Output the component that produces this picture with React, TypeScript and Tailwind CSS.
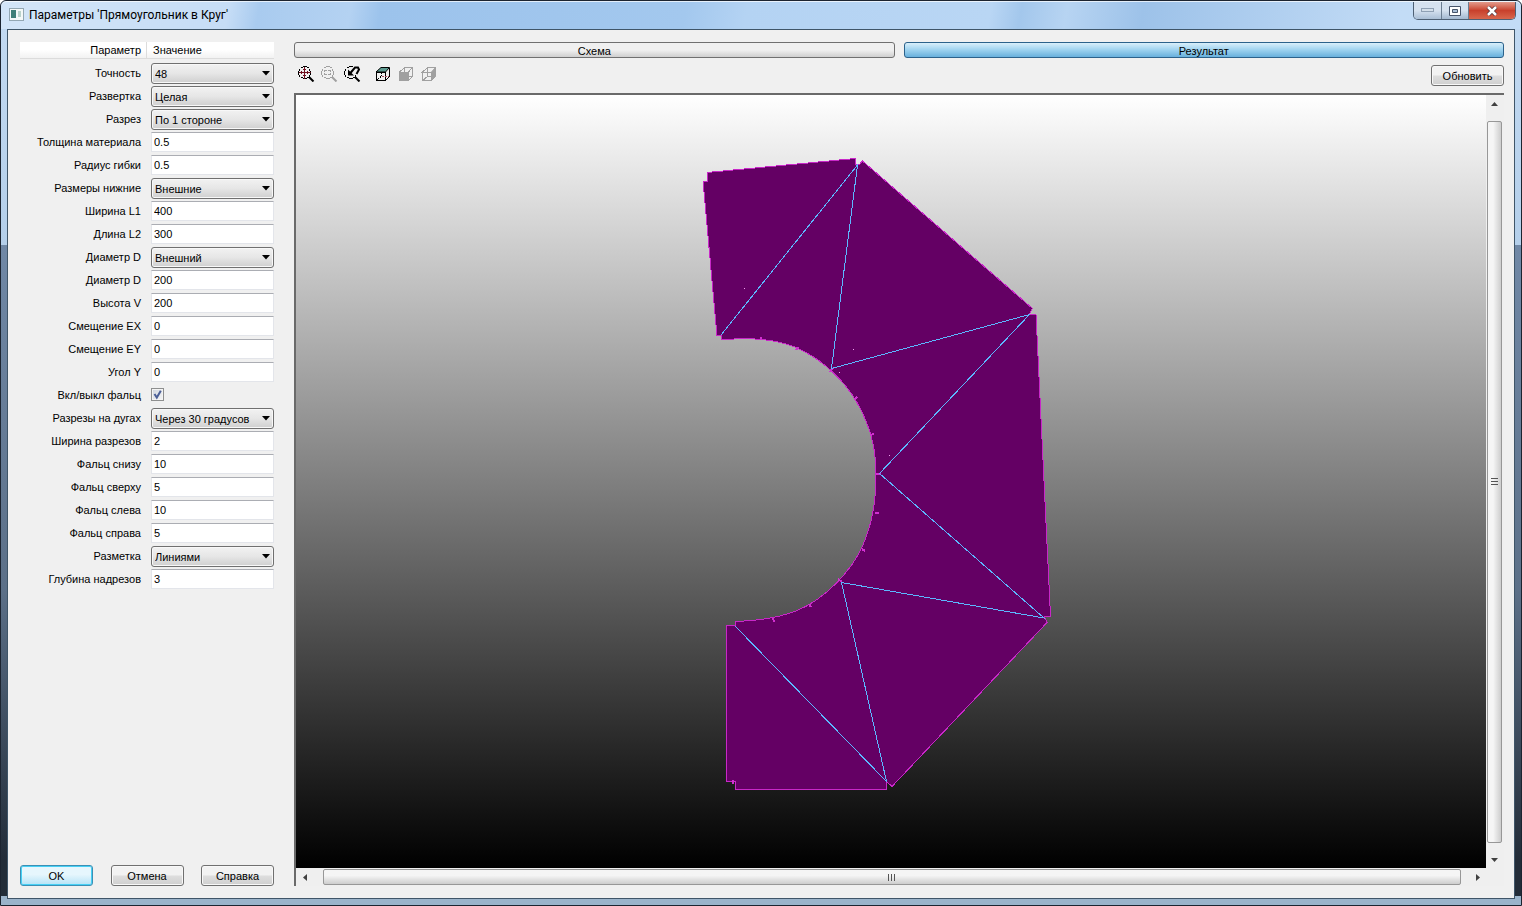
import type { ReactNode } from 'react'

type Param = {
  id: string
  label: string
  kind: 'select' | 'text' | 'check'
  value?: string
}

const params: Param[] = [
  { id: 'accuracy', label: 'Точность', kind: 'select', value: '48' },
  { id: 'unfold', label: 'Развертка', kind: 'select', value: 'Целая' },
  { id: 'cut', label: 'Разрез', kind: 'select', value: 'По 1 стороне' },
  { id: 'thickness', label: 'Толщина материала', kind: 'text', value: '0.5' },
  { id: 'radius', label: 'Радиус гибки', kind: 'text', value: '0.5' },
  { id: 'bottom', label: 'Размеры нижние', kind: 'select', value: 'Внешние' },
  { id: 'l1', label: 'Ширина L1', kind: 'text', value: '400' },
  { id: 'l2', label: 'Длина L2', kind: 'text', value: '300' },
  { id: 'dtype', label: 'Диаметр D', kind: 'select', value: 'Внешний' },
  { id: 'd', label: 'Диаметр D', kind: 'text', value: '200' },
  { id: 'v', label: 'Высота V', kind: 'text', value: '200' },
  { id: 'ex', label: 'Смещение EX', kind: 'text', value: '0' },
  { id: 'ey', label: 'Смещение EY', kind: 'text', value: '0' },
  { id: 'angle', label: 'Угол Y', kind: 'text', value: '0' },
  { id: 'seam', label: 'Вкл/выкл фальц', kind: 'check' },
  { id: 'arcs', label: 'Разрезы на дугах', kind: 'select', value: 'Через 30 градусов' },
  { id: 'cutwidth', label: 'Ширина разрезов', kind: 'text', value: '2' },
  { id: 'seambottom', label: 'Фальц снизу', kind: 'text', value: '10' },
  { id: 'seamtop', label: 'Фальц сверху', kind: 'text', value: '5' },
  { id: 'seamleft', label: 'Фальц слева', kind: 'text', value: '10' },
  { id: 'seamright', label: 'Фальц справа', kind: 'text', value: '5' },
  { id: 'marking', label: 'Разметка', kind: 'select', value: 'Линиями' },
  { id: 'depth', label: 'Глубина надрезов', kind: 'text', value: '3' },
]

function Field({ param }: { param: Param }) {
  if (param.kind === 'select') {
    return (
      <div className="relative">
        <select
          id={param.id}
          defaultValue={param.value}
          className="block h-[21px] w-full appearance-none rounded-[3px] border border-[#707070] bg-linear-to-b/srgb from-[#f2f2f2] via-[#e6e6e6] to-[#cfcfcf] pl-[3px] pr-4 pt-px leading-4 shadow-[inset_0_0_0_1px_#f8f8f8]"
        >
          <option>{param.value}</option>
        </select>
        <svg className="pointer-events-none absolute right-1 top-2 h-[5px] w-[8px]" viewBox="0 0 8 5">
          <path d="M0 0h8L4 4.6z" fill="#000" />
        </svg>
      </div>
    )
  }
  if (param.kind === 'check') {
    return (
      <div className="relative mt-[3px] size-[13px]">
        <input
          id={param.id}
          type="checkbox"
          defaultChecked
          className="block size-[13px] appearance-none border border-[#8e8f8f] bg-linear-to-br from-[#cfd5de] to-[#f6f6f6] shadow-[inset_0_0_0_1px_#f4f4f4]"
        />
        <svg className="pointer-events-none absolute inset-0" width="13" height="13" viewBox="0 0 13 13">
          <path d="M3.5 6l2.3 3.6L9.8 2.8" fill="none" stroke="#4b5f97" strokeWidth="2" />
        </svg>
      </div>
    )
  }
  return (
    <input
      id={param.id}
      type="text"
      defaultValue={param.value}
      className="block h-5 w-full border border-[#e3e5ea] border-t-[#abadb3] bg-white pl-[2px] leading-4"
    />
  )
}

function DialogButton({ children, primary }: { children: ReactNode; primary?: boolean }) {
  return (
    <button
      type="button"
      className={
        primary
          ? 'h-[21px] w-[73px] rounded-[3px] border border-[#3c8fb4] bg-linear-to-b from-[#e6f6fd] from-45% to-[#b4e2f6] shadow-[inset_0_0_0_1px_#46d0f5]'
          : 'h-[21px] w-[73px] rounded-[3px] border border-[#707070] bg-linear-to-b from-[#f2f2f2] from-45% via-[#dddddd] via-55% to-[#cfcfcf] shadow-[inset_0_0_0_1px_#f8f8f8]'
      }
    >
      {children}
    </button>
  )
}

function ToolButton({ label, disabled, children }: { label: string; disabled?: boolean; children: ReactNode }) {
  return (
    <button type="button" aria-label={label} disabled={disabled} className="flex h-4 w-[23px] items-center">
      <svg width="17" height="16" viewBox="0 0 17 16" fill="none" stroke={disabled ? '#a0a0a0' : '#000'} shapeRendering="crispEdges">
        {children}
      </svg>
    </button>
  )
}

function Toolbar() {
  return (
    <div className="flex pt-px">
      <ToolButton label="Показать все">
        <path d="M4.500 .5h4M2.500 1.500h2M8.500 1.500h2M1.500 2.500v2M11.500 2.500v2M.5 4.500v4M12.500 4.500v4M1.500 8.500v2M11.500 8.500v2M2.500 11.500h2M8.500 11.500h2M4.500 12.500h4" />
        <path d="M11 11l4.5 4.5" strokeWidth="2" shapeRendering="auto" />
        <path d="M1 6.500h12M6.500 1v12M3.500 5v3M9.500 5v3M5 3.500h3M5 9.500h3" stroke="#701020" />
      </ToolButton>
      <ToolButton label="Рамка" disabled>
        <path d="M4.500 .5h4M2.500 1.500h2M8.500 1.500h2M1.500 2.500v2M11.500 2.500v2M.5 4.500v4M12.500 4.500v4M1.500 8.500v2M11.500 8.500v2M2.500 11.500h2M8.500 11.500h2M4.500 12.500h4" />
        <path d="M11 11l4.5 4.5" strokeWidth="2" shapeRendering="auto" />
        <path d="M3.500 6V4.500H6M7 4.500h2.500V6M3.500 7v1.500H6M7 8.500h2.500V7" />
      </ToolButton>
      <ToolButton label="Предыдущий вид">
        <path d="M4.500 .5h4M2.500 1.500h2M1.500 2.500v2M.5 4.500v4M1.500 8.500v2M11.500 8.500v2M2.500 11.500h2M8.500 11.500h2M4.500 12.500h4" />
        <path d="M11 11l4.5 4.5" strokeWidth="2" shapeRendering="auto" />
        <path d="M4 3.500v6h6z" fill="#000" stroke="none" shapeRendering="auto" />
        <path d="M6 7.500l5-6h3l1 2-2.500 4.500" strokeWidth="2" shapeRendering="auto" />
      </ToolButton>
      <div className="w-2" />
      <ToolButton label="Вид сверху">
        <path d="M1 6l5-4.500h8.500l-4 4.500z" fill="#5c9a90" shapeRendering="auto" />
        <path d="M1.500 6v8.500h9V6h-9M10.500 14.500l4-4V1.500" />
        <path d="M6.500 6.500v4M2 14l4.500-4" strokeDasharray="1 1" />
        <path d="M7 10.500h7" stroke="#a05060" strokeDasharray="2 1" />
      </ToolButton>
      <ToolButton label="Вид спереди" disabled>
        <path d="M1 6h10v9H1z" fill="#a0a0a0" stroke="none" />
        <path d="M1.500 6l5-4.500h8v9l-4 4M10.500 6l4-4.500M6.500 1.500V6M11 10.500h3" />
      </ToolButton>
      <ToolButton label="Вид сбоку" disabled>
        <path d="M10.500 6l4-4.500v9l-4 4z" fill="#a0a0a0" shapeRendering="auto" />
        <path d="M1.500 6v8.500h9V6h-9l5-4.500h8M6.500 1.500v9H11M1.500 14.500l5-4" />
      </ToolButton>
    </div>
  )
}

// Flat pattern of the rectangle-to-round transition
function Pattern() {
  return (
    <svg className="absolute inset-0 size-full" viewBox="296 95 1190 773" shapeRendering="crispEdges">
      <path
        d="M707 172.500L855.500 158.500V164L859 165L862.500 161L1032.500 308.500L1029 314.500H1036L1050.500 616H1044L1047 622.500L892 786.500L886.500 781.500V789.500H735.500V781.500H726.500V625.500H735.500V621.500C752 621 775 619 796 611C826 599 852 570 863 545C873 521 876 500 876 473C876 440 866 415 851 393C838 375 820 358 795 347C770 338 752 338 721.500 339.500V335.500H717L703 181H707Z"
        fill="#640064"
        stroke="#c828c8"
      />
      <path
        d="M760.500 340v-3M796 350l2-3M830 372l3-4M854 400l3-3M870 435l4-1M876 473.500h5M875 512.500h4M862 549l3 2M838 579l4 3M809 604l2 3M773 618l1 4M733 780v4"
        stroke="#d030d0"
        fill="none"
        strokeWidth="2"
      />
      <path
        d="M721 335L857.500 165L831.500 368.500L1029.500 314.500L879.500 473.500L1044 618L841.500 582.500L886.500 781.500L735 626"
        stroke="#5cb8ff"
        fill="none"
      />
      <path d="M744 288h1v1h-1zM853 349h1v1h-1zM839 372h1v1h-1zM889 455h1v1h-1z" fill="#f0a0f0" />
    </svg>
  )
}

function ScrollArrow({ label, d, className }: { label: string; d: string; className: string }) {
  return (
    <button type="button" aria-label={label} className={className}>
      <svg width="7" height="7" viewBox="0 0 7 7">
        <path d={d} fill="#404040" />
      </svg>
    </button>
  )
}

export default function App() {
  return (
    <div className="flex min-h-screen flex-col rounded-t-md border border-[#1c2430] bg-[linear-gradient(to_bottom,#c3daf2_0%,#b4cfea_27%,#7088a6_27%,#5c7088_65%,#222c38_95%,#222c38_99%,#9ab3ca_99%)] px-[6px] pb-[6px] font-['Liberation_Sans',sans-serif] text-[11px] leading-4 text-black">
      <header className="-mx-[6px] flex h-7 items-start rounded-t-md border-t border-white/70 bg-[linear-gradient(100deg,#d3e5f8_0%,#c6ddf6_15%,#a9cbef_17%,#b4d2f2_23%,#9cc3ec_25%,#a3c8ee_45%,#b4d3f3_49%,#b9d6f4_65%,#a3c7ec_67%,#b7d4f2_70%,#9dc2e9_75%,#c3dcf6_92%)] pl-2">
        <svg className="mt-[6px]" width="15" height="13" viewBox="0 0 15 13">
          <rect x=".5" y=".5" width="14" height="12" fill="#f4f8f8" stroke="#93a7b3" />
          <rect x="2" y="2" width="5" height="8" fill="#3f7f78" />
          <rect x="9" y="3" width="3" height="6" fill="#b9d2cb" />
        </svg>
        <h1 className="ml-[5px] mt-[5px] flex-1 font-['Roboto',sans-serif] text-[12px]">Параметры 'Прямоугольник в Круг'</h1>
        <div className="mr-[5px] flex h-[18px] overflow-hidden rounded-b-[5px] border border-t-0 border-[#4e6074]">
          <button type="button" aria-label="Свернуть" className="flex w-7 items-center justify-center border-r border-[#6b7d91] bg-linear-to-b from-[#d5e1ef] from-50% to-[#aabfd6]">
            <svg width="13" height="5" viewBox="0 0 13 5"><rect x=".5" y=".5" width="12" height="3" fill="#d4dfea" stroke="#8fa0b4" /></svg>
          </button>
          <button type="button" aria-label="Развернуть" className="flex w-[27px] items-center justify-center border-r border-[#6b7d91] bg-linear-to-b from-[#d5e1ef] from-50% to-[#a3b8d0]">
            <svg width="12" height="10" viewBox="0 0 12 10"><path d="M.5.5h11v9H.5z" fill="#fff" stroke="#47546a" /><path d="M3.500 3.500h5v3h-5z" fill="#a9bdd5" stroke="#47546a" /></svg>
          </button>
          <button type="button" aria-label="Закрыть" className="flex w-[46px] items-center justify-center bg-linear-to-b from-[#e29a8c] from-0% via-[#c8402c] via-50% to-[#d8664c]">
            <svg width="12" height="10" viewBox="0 0 12 10"><path d="M2 1l8 8M10 1L2 9" stroke="#4b3038" strokeWidth="4" /><path d="M2 1l8 8M10 1L2 9" stroke="#fff" strokeWidth="2.500" /></svg>
          </button>
        </div>
      </header>

      <main className="flex flex-1 border border-[#3f5568] bg-[#f0f0f0] pb-3 pl-3 pr-[10px] pt-3">
        <section className="flex w-[254px] shrink-0 flex-col">
          <table className="w-full table-fixed border-collapse">
            <thead>
              <tr className="h-[20px] align-top">
                <th className="w-[127px] p-0 text-right font-normal">
                  <div className="h-[17px] border-b border-r border-[#dcdcdc] bg-linear-to-b from-white from-50% to-[#f2f2f2] pr-[5px]">Параметр</div>
                </th>
                <th className="p-0 text-left font-normal">
                  <div className="h-[17px] border-b border-[#dcdcdc] bg-linear-to-b from-white from-50% to-[#f2f2f2] pl-[6px]">Значение</div>
                </th>
              </tr>
            </thead>
            <tbody>
              {params.map((param) => (
                <tr key={param.id} className="h-[23px] align-top">
                  <td className="p-0 pr-[6px] text-right">
                    <label htmlFor={param.id} className="block leading-[22px]">{param.label}</label>
                  </td>
                  <td className="p-0 pl-[4px] pt-px">
                    <Field param={param} />
                  </td>
                </tr>
              ))}
            </tbody>
          </table>
          <div className="mt-auto flex justify-between">
            <DialogButton primary>OK</DialogButton>
            <DialogButton>Отмена</DialogButton>
            <DialogButton>Справка</DialogButton>
          </div>
        </section>

        <section className="ml-5 flex min-w-0 flex-1 flex-col">
          <div className="flex gap-[9px]">
            <button type="button" className="flex h-4 flex-1 items-center justify-center overflow-hidden rounded-[3px] border border-[#707070] bg-linear-to-b from-[#f0f0f0] from-50% to-[#cfcfcf] pt-px">
              Схема
            </button>
            <button type="button" className="flex h-4 flex-1 items-center justify-center overflow-hidden rounded-[3px] border border-[#2c628b] bg-linear-to-b from-[#d9effa] from-0% via-[#9dd2ef] via-50% to-[#68b0dc] pt-px">
              Результат
            </button>
          </div>
          <div className="flex h-[35px] items-start justify-between pl-1 pt-[7px]">
            <Toolbar />
            <DialogButton>Обновить</DialogButton>
          </div>
          <div className="flex flex-1 flex-col border-l-2 border-t-2 border-[#6a6a6a]">
            <div className="flex flex-1">
              <div className="relative flex-1 bg-linear-to-b/srgb from-white to-black">
                <Pattern />
              </div>
              <div className="flex w-[18px] flex-col bg-[#efefef] pl-px pr-[2px]">
                <ScrollArrow label="Вверх" d="M0 5h7L3.500 1z" className="flex h-[26px] items-center justify-center pb-2" />
                <div className="flex flex-1 items-center justify-center rounded-[2px] border border-[#979797] bg-linear-to-r from-[#f5f5f5] from-40% to-[#cdcdcd]">
                  <svg width="7" height="8" viewBox="0 0 7 8"><path d="M0 .5h7M0 3.500h7M0 6.500h7" stroke="#555" /></svg>
                </div>
                <ScrollArrow label="Вниз" d="M0 2h7L3.500 6z" className="flex h-[25px] items-center justify-center pt-2" />
              </div>
            </div>
            <div className="flex h-[18px] bg-[#efefef] py-px pr-[18px]">
              <ScrollArrow label="Влево" d="M5 0v7L1 3.500z" className="flex w-[27px] items-center justify-center pr-2" />
              <div className="flex flex-1 items-center justify-center rounded-[2px] border border-[#979797] bg-linear-to-b from-[#f5f5f5] from-40% to-[#cdcdcd]">
                <svg width="8" height="7" viewBox="0 0 8 7"><path d="M.5 0v7M3.500 0v7M6.500 0v7" stroke="#555" /></svg>
              </div>
              <ScrollArrow label="Вправо" d="M2 0v7l4-3.500z" className="flex w-[25px] items-center justify-center pl-2" />
            </div>
          </div>
        </section>
      </main>
    </div>
  )
}
